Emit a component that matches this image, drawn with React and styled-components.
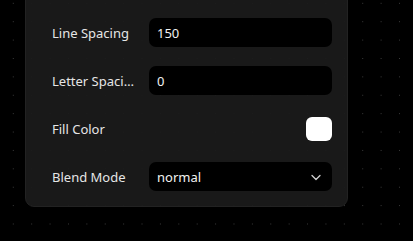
import React from 'react'
import styled, { createGlobalStyle } from 'styled-components'

const GlobalStyle = createGlobalStyle`
  html, body {
    margin: 0;
    padding: 0;
    background: #000;
  }
  body {
    font-family: 'Noto Sans', 'Open Sans', sans-serif;
  }
`

const Canvas = styled.div`
  width: 413px;
  height: 241px;
  overflow: hidden;
  background-color: #000;
  background-image: radial-gradient(circle, #3c3c3c 0.7px, transparent 0.9px);
  background-size: 18.4px 18.4px;
  background-position: 4.1px -5.9px;
`

const Panel = styled.div`
  box-sizing: border-box;
  margin: -11px 0 0 25px;
  width: 323px;
  padding: 28px 15px 15px 26px;
  display: flex;
  flex-direction: column;
  gap: 19px;
  background: rgba(27, 27, 27, 0.93);
  border: 1px solid #222;
  border-radius: 9px;
`

const Row = styled.div`
  display: flex;
  align-items: center;
  height: 29px;
  gap: 13px;
`

const Label = styled.div`
  width: 84px;
  flex-shrink: 0;
  font-size: 13px;
  color: #e6e6e6;
  white-space: nowrap;
  overflow: hidden;
  text-overflow: ellipsis;
`

const Field = styled.div`
  flex: 1;
  height: 29px;
  box-sizing: border-box;
  display: flex;
  align-items: center;
  justify-content: space-between;
  padding: 0 10px 0 8px;
  background: #000;
  border-radius: 7px;
  font-size: 13px;
  color: #f2f2f2;
`

const Spacer = styled.div`
  flex: 1;
`

const Swatch = styled.div`
  width: 26px;
  height: 24px;
  border-radius: 6px;
  background: ${p => p.color};
`

const Chevron = () => (
  <svg width="12" height="12" viewBox="0 0 12 12" fill="none">
    <path d="M2 4.5 L6 8.5 L10 4.5" stroke="#d0d0d0" strokeWidth="1.3" strokeLinecap="round" strokeLinejoin="round" />
  </svg>
)

export default function App() {
  return (
    <>
      <GlobalStyle />
      <Canvas>
        <Panel>
          <Row>
            <Label>Line Spacing</Label>
            <Field>150</Field>
          </Row>
          <Row>
            <Label>Letter Spacing</Label>
            <Field>0</Field>
          </Row>
          <Row>
            <Label>Fill Color</Label>
            <Spacer />
            <Swatch color="#fff" />
          </Row>
          <Row>
            <Label>Blend Mode</Label>
            <Field>
              normal
              <Chevron />
            </Field>
          </Row>
        </Panel>
      </Canvas>
    </>
  )
}
